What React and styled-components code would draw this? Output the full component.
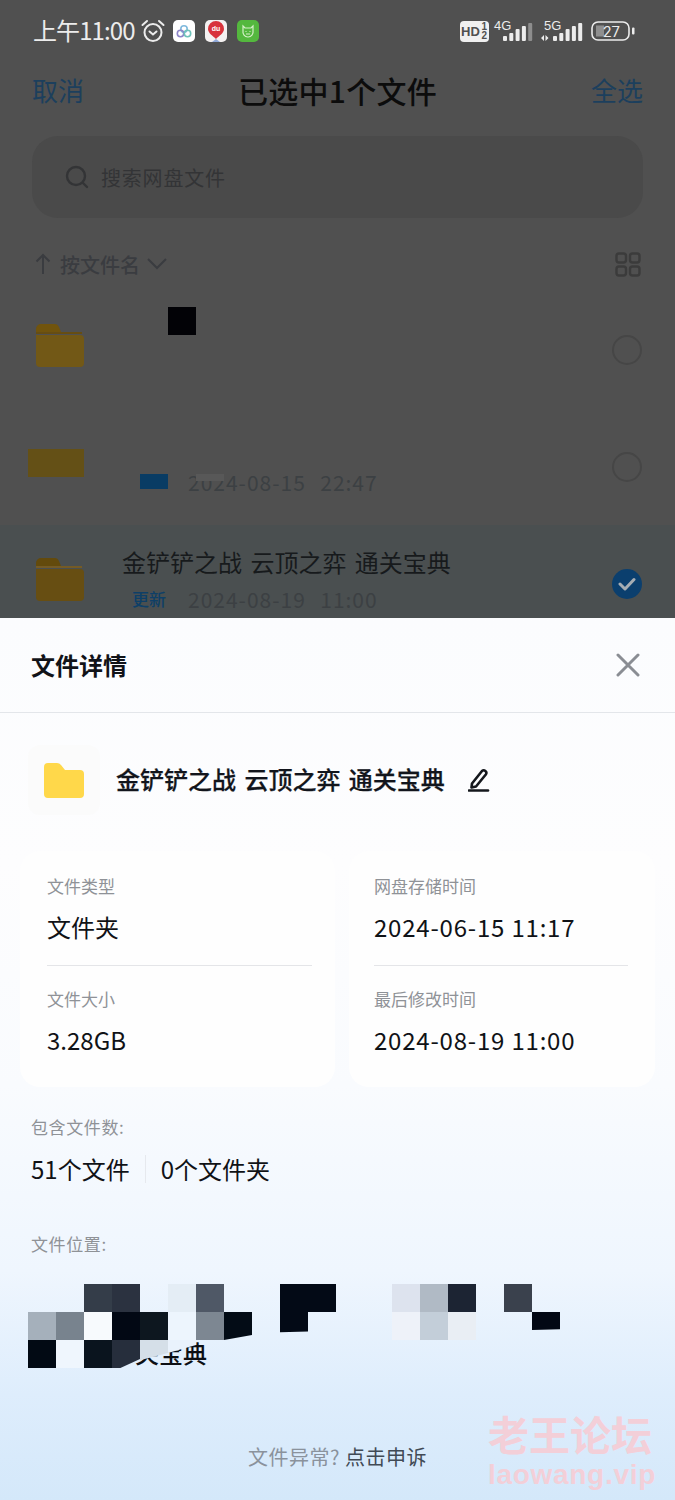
import React from 'react';
import styled, { createGlobalStyle } from 'styled-components';

const Global = createGlobalStyle`
    html, body { margin: 0; padding: 0; background: #505050; }
    * { box-sizing: border-box; }
    body { font-family: "Noto Sans CJK SC", "Noto Sans", sans-serif; }
`;

const Page = styled.div`
    position: relative;
    width: 675px;
    height: 1500px;
    overflow: hidden;
    display: flex;
    flex-direction: column;
`;

/* parte escurecida atras da folha */
const Backdrop = styled.div`
    height: 618px;
    flex: none;
    overflow: hidden;
    background: #505050;
`;

const StatusBar = styled.div`
    height: 62px;
    display: flex;
    align-items: center;
    padding: 0 40px 0 33px;
    color: #ececec;
`;

const Clock = styled.span`
    font-size: 24px;
    letter-spacing: -0.9px;
    line-height: 1;
    width: 108px;
    margin-top: -2px;
`;

const AppIcon = styled.span`
    width: 22px;
    height: 22px;
    border-radius: 5px;
    background: ${p => p.$bg};
    margin-left: ${p => p.$gap}px;
    flex: none;
    display: flex;
`;

const StatusRight = styled.div`
    margin-left: auto;
    display: flex;
    align-items: center;
`;

const HdBadge = styled.span`
    width: 29px;
    height: 21px;
    border-radius: 4px;
    background: #f0f0f0;
    color: #505050;
    font: 700 13px/21px "Liberation Sans", sans-serif;
    padding-left: 1px;
    display: flex;
    align-items: center;
    gap: 1px;
`;

const HdFraction = styled.span`
    font-size: 10px;
    line-height: 9px;
    width: 7px;
    text-align: center;
`;

const StatusGap = styled.span`
    width: ${p => p.$w}px;
    flex: none;
`;

const NavBar = styled.div`
    height: 60px;
    display: flex;
    align-items: center;
    justify-content: space-between;
    padding: 0 32px 4px;
`;

const NavLink = styled.span`
    font-size: 26px;
    color: #1c3f5d;
    line-height: 1;
`;

const NavTitle = styled.span`
    font-size: 30px;
    font-weight: 500;
    color: #0c0c0c;
    line-height: 1;
    letter-spacing: 0.3px;
`;

const SearchBox = styled.div`
    margin: 14px 32px 0;
    height: 82px;
    border-radius: 26px;
    background: #4a4a4a;
    display: flex;
    align-items: center;
    padding: 0 33px;
    gap: 12px;
    color: #333436;
    font-size: 20px;
    letter-spacing: 0.8px;
`;

const SortRow = styled.div`
    height: 73px;
    padding: 19px 34px 0 35px;
    display: flex;
    align-items: center;
    color: #3a3c40;
    font-size: 20px;
`;

const SortLabel = styled.span`
    margin: 0 6px 0 9px;
    font-weight: 500;
`;

const GridIcon = styled.svg`
    margin-left: auto;
`;

const FileRow = styled.div`
    position: relative;
    height: 117px;
    display: grid;
    grid-template-columns: 84px 1fr 96px;
    column-gap: 38px;
    align-items: center;
    background: ${p => (p.$selected ? '#4a4f50' : 'transparent')};
`;

const FolderSlot = styled.div`
    justify-self: end;
    display: flex;
    margin-bottom: 8px;
`;

const RedactedFolder = styled.div`
    width: 56px;
    height: 28px;
    background: #645016;
`;

const FileText = styled.div`
    min-width: 0;
    margin-bottom: 10px;
`;

const FileName = styled.div`
    font-size: 24px;
    line-height: 32px;
    height: 32px;
    color: #171a1c;
    word-spacing: 3px;
    white-space: nowrap;
`;

const FileMeta = styled.div`
    position: relative;
    margin: 8px 0 0 10px;
    display: flex;
    align-items: center;
    height: 26px;
    font-size: 21px;
    color: #3c4043;
    letter-spacing: 1px;
    word-spacing: 1.5px;
    white-space: pre;
`;

const MetaTag = styled.span`
    width: 56px;
    flex: none;
    font-size: 17px;
    font-weight: 500;
    color: #0e3f67;
    letter-spacing: 0;
`;

const TagBlock = styled.span`
    display: block;
    width: 28px;
    height: 15px;
    margin-left: 8px;
    background: #093c64;
`;

const DatePatch = styled.span`
    position: absolute;
    left: 64px;
    top: 5px;
    width: 28px;
    height: 7px;
    background: #585858;
`;

const BlackSquare = styled.div`
    position: absolute;
    left: 168px;
    top: 16px;
    width: 28px;
    height: 28px;
    background: #020206;
`;

const RadioRing = styled.div`
    justify-self: center;
    width: 30px;
    height: 30px;
    border-radius: 50%;
    border: 2px solid #464646;
`;

const RadioChecked = styled(RadioRing)`
    border: none;
    background: #0b3f6e;
    display: flex;
    align-items: center;
    justify-content: center;
`;

/* folha de detalhes */
const Sheet = styled.div`
    flex: 1;
    background: linear-gradient(180deg, #fbfcfe 0%, #fdfdfe 28%, #f9fbfe 53%, #eff6fe 74%, #deedfc 88%, #d4e8fa 100%);
    display: flex;
    flex-direction: column;
`;

const SheetHeader = styled.div`
    height: 95px;
    flex: none;
    padding: 0 35px 0 31px;
    border-bottom: 1px solid #e3e6ea;
    display: flex;
    align-items: center;
    justify-content: space-between;
`;

const SheetTitle = styled.span`
    font-size: 24px;
    font-weight: 700;
    color: #111318;
    line-height: 1;
`;

const NameRow = styled.div`
    margin: 32px 0 0 28px;
    height: 70px;
    display: flex;
    align-items: center;
`;

const FolderTile = styled.div`
    width: 72px;
    height: 70px;
    border-radius: 12px;
    background: #fbfbfb;
    display: flex;
    align-items: center;
    justify-content: center;
`;

const NameText = styled.span`
    margin: 0 23px 4px 16px;
    font-size: 24px;
    font-weight: 500;
    -webkit-text-stroke: 0.25px #12151c;
    color: #12151c;
    word-spacing: 3px;
    white-space: nowrap;
`;

const Cards = styled.div`
    margin: 36px 20px 0;
    display: grid;
    grid-template-columns: 315px 306px;
    column-gap: 14px;
`;

const Card = styled.div`
    background: #fefefe;
    border-radius: 20px;
    padding: 2px ${p => p.$right}px 0 ${p => p.$left}px;
    height: 236px;
`;

const Field = styled.div`
    height: 113px;
    padding-top: 20px;
    border-bottom: ${p => (p.$line ? '1px solid #e4e5e8' : 'none')};
`;

const Label = styled.div`
    font-size: 17px;
    line-height: 26px;
    color: #8f9297;
`;

const SectionLabel = styled(Label)`
    letter-spacing: 0.6px;
`;

const Value = styled.div`
    margin-top: 12px;
    font-size: 24px;
    line-height: 32px;
    color: #101216;
    white-space: nowrap;
    letter-spacing: ${p => (p.$digits ? '0.8px' : '0')};
`;

const Section = styled.div`
    position: relative;
    margin: ${p => p.$top}px 31px 0;
`;

const CountRow = styled.div`
    margin-top: 13px;
    display: flex;
    align-items: center;
    font-size: 24px;
    line-height: 32px;
    color: #101216;
`;

const CountGap = styled.span`
    width: 1px;
    height: 28px;
    background: #e6e9ee;
    margin: 0 15px;
`;

const PathTail = styled.div`
    margin: 80px 0 0 104px;
    font-size: 24px;
    line-height: 32px;
    font-weight: 500;
    color: #0c0f14;
`;

/* mosaico que cobre o caminho */
const Mosaic = styled.div`
    position: absolute;
    left: -3px;
    top: 53px;
    display: grid;
    grid-template-columns: repeat(19, 28px);
    grid-auto-rows: 28px;
`;

const Tile = styled.span`
    background: ${p => p.$c || 'transparent'};
    clip-path: ${p => p.$clip || 'none'};
`;

const Complaint = styled.div`
    margin-top: auto;
    padding-bottom: 28px;
    align-self: center;
    font-size: 20px;
    line-height: 30px;
    letter-spacing: 0.5px;
    color: #8a929c;
`;

const ComplaintLink = styled.span`
    color: #414a55;
`;

const Watermark = styled.div`
    position: absolute;
    left: 488px;
    top: 1408px;
    color: #f3cfd8;
    font-weight: 700;
`;

const WatermarkCn = styled.div`
    font-size: 41px;
    line-height: 50px;
`;

const WatermarkEn = styled.div`
    font-family: "Liberation Sans", sans-serif;
    font-size: 28px;
    line-height: 34px;
    letter-spacing: 0.7px;
`;

const DimFolder = ({ dark }) => (
    <svg width="48" height="43" viewBox="0 0 48 43">
        <path d="M0 5a5 5 0 0 1 5-5h13a5 5 0 0 1 5 3l2 5h-25z" fill={dark ? '#634a0c' : '#71540d'} />
        <path d="M0 11h44a4 4 0 0 1 4 4v24a4 4 0 0 1-4 4H4a4 4 0 0 1-4-4z" fill={dark ? '#674e12' : '#725816'} />
        <path d="M0 9h46" stroke={dark ? '#745b26' : '#664d13'} strokeWidth="2" />
    </svg>
);

const Signal = ({ label, arrows, dim }) => {
    const bars = [5, 8, 12, 15, 18];
    return (
        <svg width="44" height="24" viewBox="0 0 44 24">
            <text x="4" y="11" fontSize="13" fontFamily="Liberation Sans, sans-serif" fill="#ececec">{label}</text>
            {arrows && <path d="M1 19l3-3v6zM5.500 16v6l3-3z" fill="#ececec" />}
            {bars.map((h, i) => (
                <rect key={i} x={13 + i * 6.3} y={22 - h} width="4" height={h} rx="1" fill={dim && i === 4 ? '#8d8d8d' : '#ececec'} />
            ))}
        </svg>
    );
};

const tiles = [
    [null, null, '#343d49', '#2b3240', null, '#e4edf5', '#4f5866', null, null, '#030a16', '#030a16', null, null, '#dde3ee', '#b0bac5', '#1c2433', null, '#3a414d', null],
    ['#a5b0bb', '#78838e', '#f7fafd', '#020814', '#0d171f', '#edf5fd', '#7d8792', ['#030c16', 'polygon(0 0,100% 0,100% 82%,0 100%)'], null, ['#030a16', 'polygon(0 0,100% 0,100% 70%,0 72%)'], null, null, null, '#eef2f9', '#c3ced9', '#e9eef4', null, null, ['#020814', 'polygon(0 0,100% 0,100% 62%,0 64%)']],
    ['#020a14', '#eff6fd', '#0a141e', ['#262e3c', 'polygon(0 0,100% 0,100% 68%,30% 100%,0 100%)'], ['#d5dfe8', 'polygon(0 0,100% 0,100% 46%,0 72%)'], ['#e9f2fc', 'polygon(0 0,100% 0,100% 18%,0 46%)']],
];

const App = () => (
    <Page>
        <Global />
        <Backdrop>
            <StatusBar>
                <Clock>上午11:00</Clock>
                <svg width="24" height="24" viewBox="0 0 24 24" fill="none" stroke="#ececec" strokeWidth="2" strokeLinecap="round">
                    <circle cx="12" cy="13.5" r="8.5" />
                    <path d="M1.5 6 6 2M22.5 6 18 2" />
                    <path d="M8.5 12.5 12 15.5l3.5-3" />
                </svg>
                <AppIcon $bg="#ffffff" $gap={8}>
                    <svg width="22" height="22" viewBox="0 0 22 22" fill="none" strokeWidth="1.6">
                        <circle cx="11" cy="9" r="3.2" stroke="#7fb9dd" />
                        <circle cx="7.500" cy="13.500" r="3.2" stroke="#8d85c8" />
                        <circle cx="14.500" cy="13.500" r="3.2" stroke="#6fc2ba" />
                    </svg>
                </AppIcon>
                <AppIcon $bg="#f4f1f1" $gap={10}>
                    <svg width="22" height="22" viewBox="0 0 22 22">
                        <path d="M11 1a8 8 0 0 1 8 8c0 4-5 7-8 10-3-3-8-6-8-10a8 8 0 0 1 8-8z" fill="#d8333c" />
                        <text x="11" y="11" textAnchor="middle" fontSize="7" fontWeight="700" fontFamily="Liberation Sans, sans-serif" fill="#fff">du</text>
                        <path d="M7 22l4-3 4 3z" fill="#8fa8d8" />
                    </svg>
                </AppIcon>
                <AppIcon $bg="#54b83e" $gap={10}>
                    <svg width="22" height="22" viewBox="0 0 22 22" fill="none" stroke="#d6f0c8" strokeWidth="1.2">
                        <path d="M6 6l2 2h6l2-2v5a5 5 0 0 1-5 6 5 5 0 0 1-5-6z" />
                        <path d="M8.500 11.500h1M12.500 11.500h1M9 14h4" />
                    </svg>
                </AppIcon>
                <StatusRight>
                    <HdBadge>HD<HdFraction>1<br />2</HdFraction></HdBadge>
                    <StatusGap $w={1} />
                    <Signal label="4G" dim />
                    <StatusGap $w={6} />
                    <Signal label="5G" arrows />
                    <StatusGap $w={7} />
                    <svg width="44" height="20" viewBox="0 0 44 20">
                        <rect x="1" y="1" width="37" height="18" rx="6" fill="none" stroke="#ececec" strokeWidth="1.6" />
                        <rect x="5" y="4.500" width="8" height="11" fill="#8f8f8f" />
                        <text x="20.500" y="15.500" textAnchor="middle" fontSize="15" fontFamily="Roboto, sans-serif" fill="#ececec">27</text>
                        <rect x="41" y="6.500" width="2.500" height="7" rx="1" fill="#ececec" />
                    </svg>
                </StatusRight>
            </StatusBar>
            <NavBar>
                <NavLink>取消</NavLink>
                <NavTitle>已选中1个文件</NavTitle>
                <NavLink>全选</NavLink>
            </NavBar>
            <SearchBox>
                <svg width="24" height="24" viewBox="0 0 24 24" fill="none" stroke="#333436" strokeWidth="2.4" strokeLinecap="round">
                    <circle cx="11" cy="11" r="9" />
                    <path d="M18 18l4 4" />
                </svg>
                搜索网盘文件
            </SearchBox>
            <SortRow>
                <svg width="16" height="22" viewBox="0 0 16 22" fill="none" stroke="#3a3c40" strokeWidth="2">
                    <path d="M8 21V2M1.500 8.500 8 2l6.500 6.500" />
                </svg>
                <SortLabel>按文件名</SortLabel>
                <svg width="22" height="14" viewBox="0 0 22 14" fill="none" stroke="#3a3c40" strokeWidth="2">
                    <path d="M2 2l9 9 9-9" />
                </svg>
                <GridIcon width="26" height="25" viewBox="0 0 26 25" fill="none" stroke="#3b3b3b" strokeWidth="2.4">
                    <rect x="1.500" y="1.500" width="9.500" height="9" rx="2.500" />
                    <rect x="15" y="1.500" width="9.500" height="9" rx="2.500" />
                    <rect x="1.500" y="14.500" width="9.500" height="9" rx="2.500" />
                    <rect x="15" y="14.500" width="9.500" height="9" rx="2.500" />
                </GridIcon>
            </SortRow>
            <FileRow>
                <FolderSlot><DimFolder /></FolderSlot>
                <FileText />
                <RadioRing />
                <BlackSquare />
            </FileRow>
            <FileRow>
                <FolderSlot><RedactedFolder /></FolderSlot>
                <FileText>
                    <FileName />
                    <FileMeta>
                        <MetaTag><TagBlock /></MetaTag>
                        2024-08-15  22:47
                        <DatePatch />
                    </FileMeta>
                </FileText>
                <RadioRing />
            </FileRow>
            <FileRow $selected>
                <FolderSlot><DimFolder dark /></FolderSlot>
                <FileText>
                    <FileName>金铲铲之战 云顶之弈 通关宝典</FileName>
                    <FileMeta>
                        <MetaTag>更新</MetaTag>
                        2024-08-19  11:00
                    </FileMeta>
                </FileText>
                <RadioChecked>
                    <svg width="18" height="14" viewBox="0 0 18 14" fill="none" stroke="#a6adb3" strokeWidth="3" strokeLinecap="round" strokeLinejoin="round">
                        <path d="M2 7l5 5 9-9.500" />
                    </svg>
                </RadioChecked>
            </FileRow>
        </Backdrop>
        <Sheet>
            <SheetHeader>
                <SheetTitle>文件详情</SheetTitle>
                <svg width="24" height="24" viewBox="0 0 24 24" fill="none" stroke="#8a8d93" strokeWidth="3" strokeLinecap="round">
                    <path d="M2 2l20 20M22 2 2 22" />
                </svg>
            </SheetHeader>
            <NameRow>
                <FolderTile>
                    <svg width="40" height="35" viewBox="0 0 40 35">
                        <path d="M0 4a4 4 0 0 1 4-4h9a5 5 0 0 1 4 2l4 5h15a4 4 0 0 1 4 4v20a4 4 0 0 1-4 4H4a4 4 0 0 1-4-4z" fill="#ffd84a" />
                    </svg>
                </FolderTile>
                <NameText>金铲铲之战 云顶之弈 通关宝典</NameText>
                <svg width="22" height="24" viewBox="0 0 22 24" fill="none" stroke="#14171c" strokeWidth="2.6" strokeLinejoin="round" strokeLinecap="round">
                    <path d="M4 15.500 14 3a2.600 2.600 0 0 1 4 3.200L8 18.500l-4.500 1z" />
                    <path d="M1 22.500h19" />
                </svg>
            </NameRow>
            <Cards>
                <Card $left={27} $right={23}>
                    <Field $line>
                        <Label>文件类型</Label>
                        <Value>文件夹</Value>
                    </Field>
                    <Field>
                        <Label>文件大小</Label>
                        <Value>3.28GB</Value>
                    </Field>
                </Card>
                <Card $left={25} $right={27}>
                    <Field $line>
                        <Label>网盘存储时间</Label>
                        <Value $digits>2024-06-15 11:17</Value>
                    </Field>
                    <Field>
                        <Label>最后修改时间</Label>
                        <Value $digits>2024-08-19 11:00</Value>
                    </Field>
                </Card>
            </Cards>
            <Section $top={27}>
                <SectionLabel>包含文件数:</SectionLabel>
                <CountRow>
                    51个文件
                    <CountGap />
                    0个文件夹
                </CountRow>
            </Section>
            <Section $top={46}>
                <SectionLabel>文件位置:</SectionLabel>
                <PathTail>关宝典</PathTail>
                <Mosaic>
                    {tiles.flat().map((t, i) => (
                        Array.isArray(t)
                            ? <Tile key={i} $c={t[0]} $clip={t[1]} />
                            : <Tile key={i} $c={t} />
                    ))}
                </Mosaic>
            </Section>
            <Complaint>文件异常? <ComplaintLink>点击申诉</ComplaintLink></Complaint>
        </Sheet>
        <Watermark>
            <WatermarkCn>老王论坛</WatermarkCn>
            <WatermarkEn>laowang.vip</WatermarkEn>
        </Watermark>
    </Page>
);

export default App;
